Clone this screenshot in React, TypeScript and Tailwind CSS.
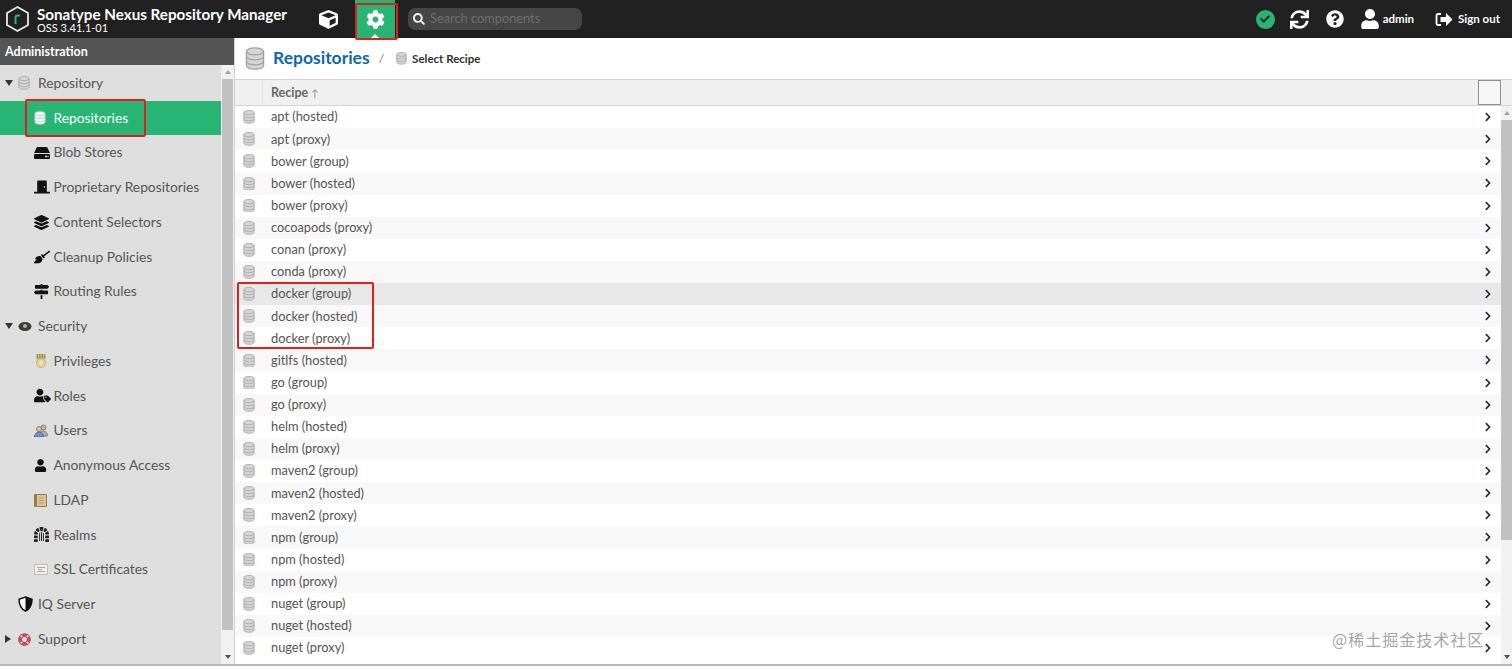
import type { ReactNode } from "react";
import {
  FaBroom,
  FaCheck,
  FaChevronRight,
  FaCog,
  FaCube,
  FaDoorClosed,
  FaDungeon,
  FaLayerGroup,
  FaLifeRing,
  FaMapSigns,
  FaQuestionCircle,
  FaSearch,
  FaSync,
  FaUser,
  FaUserTag,
} from "react-icons/fa";

const recipes = [
  "apt (hosted)",
  "apt (proxy)",
  "bower (group)",
  "bower (hosted)",
  "bower (proxy)",
  "cocoapods (proxy)",
  "conan (proxy)",
  "conda (proxy)",
  "docker (group)",
  "docker (hosted)",
  "docker (proxy)",
  "gitlfs (hosted)",
  "go (group)",
  "go (proxy)",
  "helm (hosted)",
  "helm (proxy)",
  "maven2 (group)",
  "maven2 (hosted)",
  "maven2 (proxy)",
  "npm (group)",
  "npm (hosted)",
  "npm (proxy)",
  "nuget (group)",
  "nuget (hosted)",
  "nuget (proxy)",
];

function DbIcon({ size = 14, light = false }: { size?: number; light?: boolean }) {
  const fill = light ? "#f4f4f4" : "#d6d6d6";
  const edge = light ? "#b5c9bd" : "#a2a2a2";
  return (
    <svg width={size} height={size * 1.15} viewBox="0 0 14 16" className="shrink-0">
      <path
        d="M1 3c0-1.400 2.700-2.500 6-2.500S13 1.600 13 3v10c0 1.400-2.700 2.500-6 2.500S1 14.400 1 13z"
        fill={fill}
        stroke={edge}
        strokeWidth="0.9"
      />
      <path
        d="M1 3c0 1.400 2.700 2.500 6 2.500S13 4.400 13 3M1 6.500C1 7.900 3.700 9 7 9s6-1.100 6-2.500M1 10c0 1.400 2.700 2.500 6 2.500s6-1.100 6-2.500"
        fill="none"
        stroke={edge}
        strokeWidth="0.9"
      />
    </svg>
  );
}

function BlobIcon() {
  return (
    <svg width="16" height="12" viewBox="0 0 16 12">
      <path d="M3 0h10l3 6H0z" fill="#111" />
      <rect x="0" y="7" width="16" height="5" rx="1" fill="#111" />
      <circle cx="12" cy="9.500" r="1" fill="#ddd" />
      <circle cx="14" cy="9.500" r="0.700" fill="#ddd" />
    </svg>
  );
}

function SignOutIcon() {
  return (
    <svg width="18" height="15" viewBox="0 0 18 15">
      <path d="M6 2H3a1.500 1.500 0 0 0-1.500 1.500v8A1.500 1.500 0 0 0 3 13h3" fill="none" stroke="#fff" strokeWidth="1.800" />
      <path d="M5.500 5H11V1l6.500 6.500L11 14v-4H5.500z" fill="#fff" />
    </svg>
  );
}

function Logo() {
  return (
    <svg width="25" height="28" viewBox="0 0 25 28">
      <path d="M12.500 2 L23 8 V20 L12.500 26 L2 20 V8 Z" fill="none" stroke="#e8e8e8" strokeWidth="1.800" />
      <path d="M4.500 9.500 L12.500 4.800" fill="none" stroke="#212121" strokeWidth="2" />
      <path d="M10.500 19v-6.500q0-2 2-2h2.500" fill="none" stroke="#2bb673" strokeWidth="2" />
    </svg>
  );
}

function MedalIcon() {
  return (
    <svg width="10" height="14" viewBox="0 0 10 14">
      <rect x="0.500" y="0" width="9" height="5" fill="#8f9a5c" />
      <path d="M2.500 0v5M5 0v5M7.500 0v5" stroke="#d9cf8a" strokeWidth="0.800" />
      <circle cx="5" cy="9" r="4.500" fill="#e7cf8f" stroke="#c7a95f" strokeWidth="0.800" />
      <circle cx="5" cy="9" r="2" fill="#f3e6bc" />
    </svg>
  );
}

function UsersIcon() {
  return (
    <svg width="14" height="13" viewBox="0 0 14 13">
      <circle cx="9.500" cy="3.500" r="2.500" fill="#c9b48f" stroke="#6e6a55" strokeWidth="0.700" />
      <path d="M5.500 12c0-3 1.500-5 4-5s4 2 4 5z" fill="#a7b39a" stroke="#6e6a55" strokeWidth="0.700" />
      <circle cx="5" cy="5" r="2.500" fill="#e2c7a0" stroke="#5e5f66" strokeWidth="0.700" />
      <path d="M0.500 13c0-3 1.700-5 4.500-5s4.500 2 4.500 5z" fill="#6f92c4" stroke="#44587a" strokeWidth="0.700" />
    </svg>
  );
}

function BookIcon() {
  return (
    <svg width="13" height="13" viewBox="0 0 13 13">
      <rect x="0" y="0" width="13" height="13" rx="1" fill="#9a7a4f" />
      <rect x="3" y="1" width="9" height="11" fill="#d9c294" />
      <path d="M5 4h5M5 6.500h5M5 9h5" stroke="#b49a68" strokeWidth="0.800" />
    </svg>
  );
}

function SslIcon() {
  return (
    <svg width="14" height="11" viewBox="0 0 14 11">
      <rect x="0.500" y="0.500" width="13" height="10" fill="#eeeeea" stroke="#c4bfaa" />
      <path d="M3 3.500h8M4 5.500h4M3 7.500h8" stroke="#a9a99a" />
    </svg>
  );
}

function NavRow({
  icon,
  label,
  child = false,
  arrow,
  active = false,
}: {
  icon: ReactNode;
  label: string;
  child?: boolean;
  arrow?: "down" | "right";
  active?: boolean;
}) {
  return (
    <div
      className={`flex h-[34.75px] shrink-0 items-center ${child ? "pl-[34px]" : "pl-[5px]"} ${
        active ? "bg-[#27b474] text-white" : "text-[#555555]"
      }`}
    >
      {!child && (
        <span className="flex w-[13px] shrink-0 items-center">
          {arrow === "down" && (
            <span className="h-0 w-0 border-x-[4px] border-t-[6px] border-x-transparent border-t-[#333333]" />
          )}
          {arrow === "right" && (
            <span className="h-0 w-0 border-y-[4px] border-l-[6px] border-y-transparent border-l-[#333333]" />
          )}
        </span>
      )}
      <span className={`flex shrink-0 items-center justify-start ${child ? "w-[19.5px]" : "w-[20px]"}`}>{icon}</span>
      <span className="text-[13.800px] whitespace-nowrap">{label}</span>
    </div>
  );
}

function SideScrollbar() {
  return (
    <div className="flex w-[13px] shrink-0 flex-col bg-[#f1f1f1]">
      <div className="flex h-[14px] items-center justify-center">
        <span className="h-0 w-0 border-x-[3px] border-b-[4px] border-x-transparent border-b-[#a3a3a3]" />
      </div>
      <div className="mx-[1px] h-[551px] bg-[#c1c1c1]" />
      <div className="flex-1" />
      <div className="flex h-[14px] items-center justify-center">
        <span className="h-0 w-0 border-x-[3px] border-t-[4px] border-x-transparent border-t-[#505050]" />
      </div>
    </div>
  );
}

function Sidebar() {
  return (
    <aside className="flex w-[235px] shrink-0 flex-col border-r border-[#d0d0d0] bg-[#dedede]">
      <div className="flex h-[27px] shrink-0 items-center bg-[#555555] pl-[5px] pt-[1px] text-[12.500px] font-bold text-white">
        Administration
      </div>
      <div className="flex min-h-0 flex-1">
        <div className="flex flex-1 flex-col overflow-hidden pt-[0.75px]">
          <NavRow arrow="down" label="Repository" icon={<DbIcon size={12} />} />
          <NavRow child active label="Repositories" icon={<DbIcon size={12} light />} />
          <NavRow child label="Blob Stores" icon={<BlobIcon />} />
          <NavRow child label="Proprietary Repositories" icon={<FaDoorClosed size={16} color="#111" />} />
          <NavRow child label="Content Selectors" icon={<FaLayerGroup size={15} color="#111" />} />
          <NavRow child label="Cleanup Policies" icon={<FaBroom size={16} color="#111" />} />
          <NavRow child label="Routing Rules" icon={<FaMapSigns size={15} color="#111" />} />
          <NavRow
            arrow="down"
            label="Security"
            icon={
              <svg width="14" height="11" viewBox="0 0 14 11">
                <ellipse cx="7" cy="5.500" rx="6.500" ry="4.500" fill="#3d3d35" />
                <circle cx="7" cy="5" r="2" fill="#b7b78f" />
              </svg>
            }
          />
          <NavRow child label="Privileges" icon={<span className="ml-[2px] flex"><MedalIcon /></span>} />
          <NavRow child label="Roles" icon={<FaUserTag size={17} color="#111" />} />
          <NavRow child label="Users" icon={<UsersIcon />} />
          <NavRow child label="Anonymous Access" icon={<FaUser size={13} color="#111" />} />
          <NavRow child label="LDAP" icon={<BookIcon />} />
          <NavRow child label="Realms" icon={<FaDungeon size={15} color="#222" />} />
          <NavRow child label="SSL Certificates" icon={<SslIcon />} />
          <div className="flex h-[34.75px] shrink-0 items-center pl-[18px] text-[#555555]">
            <svg width="15" height="16" viewBox="0 0 15 16" className="mr-[5px] shrink-0">
              <path d="M7.500 1 14 3.200c0 5-1.800 9.500-6.500 11.800C2.800 12.700 1 8.200 1 3.200z" fill="#fff" stroke="#111" strokeWidth="1.500" />
              <path d="M7.500 1 14 3.200c0 5-1.800 9.500-6.500 11.800z" fill="#111" />
            </svg>
            <span className="text-[13.800px]">IQ Server</span>
          </div>
          <NavRow arrow="right" label="Support" icon={<FaLifeRing size={13} color="#b7505a" />} />
        </div>
        <SideScrollbar />
      </div>
    </aside>
  );
}

function RecipeTable() {
  return (
    <div className="flex min-h-0 flex-1 flex-col">
      <div className="flex h-[27px] shrink-0 border-y border-[#d4d4d4] bg-[#f0f0f0] pr-[11px]">
        <div className="w-[28px] border-r border-[#e2e2e2]" />
        <div className="flex flex-1 items-center pl-[8px] pt-[1px] text-[12.500px] font-bold text-[#666666]">
          Recipe <span className="ml-[3px] text-[10px] font-normal text-[#888888]">↑</span>
        </div>
        <div className="h-[25px] w-[23px] border border-[#8f8f8f] bg-[#f6f6f6]" />
      </div>
      <div className="flex min-h-0 flex-1">
        <div className="flex-1 overflow-hidden">
          {recipes.map((name, i) => (
            <div
              key={name}
              className={`flex h-[22.125px] items-center pr-[8px] ${
                name === "docker (group)" ? "bg-[#e8e8e8]" : i % 2 === 1 ? "bg-[#f8f8f8]" : "bg-white"
              }`}
            >
              <span className="flex w-[36px] shrink-0 justify-start pl-[8px]">
                <DbIcon size={12} />
              </span>
              <span className="flex-1 text-[12.800px] text-[#555555]">{name}</span>
              <FaChevronRight size={10} color="#1a2a3f" />
            </div>
          ))}
        </div>
        <div className="flex w-[11px] shrink-0 flex-col bg-[#f1f1f1]">
          <div className="flex h-[14px] items-center justify-center">
            <span className="h-0 w-0 border-x-[3px] border-b-[4px] border-x-transparent border-b-[#a3a3a3]" />
          </div>
          <div className="h-[420px] bg-[#c1c1c1]" />
          <div className="flex-1" />
          <div className="flex h-[14px] items-center justify-center">
            <span className="h-0 w-0 border-x-[3px] border-t-[4px] border-x-transparent border-t-[#505050]" />
          </div>
        </div>
      </div>
    </div>
  );
}

export default function App() {
  return (
    <div className="relative flex h-[670px] w-[1512px] flex-col overflow-hidden bg-white font-['Lato','Open_Sans',sans-serif]">
      <header className="flex h-[38px] shrink-0 items-center bg-[#212121] text-white">
        <div className="ml-[5px] flex items-center">
          <Logo />
          <div className="ml-[7px] flex w-[251px] flex-col leading-none">
            <span className="text-[15.200px] font-bold leading-[16px] whitespace-nowrap">
              Sonatype Nexus Repository Manager
            </span>
            <span className="text-[11px] leading-[11px]">OSS 3.41.1-01</span>
          </div>
        </div>
        <div className="ml-[22px] flex h-[38px] w-[37px] items-center justify-center">
          <FaCube size={19} />
        </div>
        <div className="relative ml-[8px] flex h-[38px] w-[40px] items-center justify-center bg-[#27b474]">
          <FaCog size={19} />
          <span className="absolute bottom-0 left-1/2 h-0 w-0 -translate-x-1/2 border-x-[4px] border-b-[4px] border-x-transparent border-b-white" />
        </div>
        <div className="ml-[13px] flex h-[22px] w-[174px] items-center rounded-[7px] bg-[#464646] pl-[5px]">
          <FaSearch size={12} color="#f0f0f0" />
          <span className="ml-[5px] text-[12.800px] text-[#6e6e6e]">Search components</span>
        </div>
        <div className="ml-auto flex items-center">
          <span className="flex h-[19px] w-[19px] items-center justify-center rounded-full bg-[#27b474]">
            <FaCheck size={10} color="#1c2a25" />
          </span>
          <FaSync size={19} className="ml-[15px]" />
          <FaQuestionCircle size={18} className="ml-[17px]" />
          <FaUser size={20} className="ml-[16px]" />
          <span className="ml-[3px] text-[11.500px] font-bold">admin</span>
          <span className="ml-[21px]">
            <SignOutIcon />
          </span>
          <span className="ml-[5px] mr-[12px] text-[11.500px] font-bold">Sign out</span>
        </div>
      </header>

      <div className="flex h-[628px] shrink-0 border-b-2 border-[#b9b9b9]">
        <Sidebar />
        <main className="flex min-w-0 flex-1 flex-col">
          <div className="flex h-[41px] shrink-0 items-center pl-[10px]">
            <DbIcon size={20} />
            <span className="ml-[8px] text-[17.500px] font-bold text-[#0f67b0]">Repositories</span>
            <span className="ml-[9px] text-[12px] text-[#777777]">/</span>
            <span className="ml-[12px]">
              <DbIcon size={11} />
            </span>
            <span className="ml-[5px] text-[11.500px] font-bold text-[#333333]">Select Recipe</span>
          </div>
          <RecipeTable />
        </main>
      </div>

      {/* hand-drawn red marks sitting over the screenshot */}
      <div className="absolute left-[355px] top-[3px] h-[37px] w-[43px] rounded-[2px] border-2 border-[#e0201b]" />
      <div className="absolute left-[25px] top-[99px] h-[38px] w-[121px] rounded-[2px] border-2 border-[#e0201b]" />
      <div className="absolute left-[237px] top-[282px] h-[67px] w-[137px] rounded-[2px] border-2 border-[#e0201b]" />

      <div className="absolute left-[1332px] top-[627px] text-[16px] tracking-[1px] whitespace-nowrap text-[#8c8c8c]/80 font-['Noto_Sans_CJK_SC',sans-serif]">
        @稀土掘金技术社区
      </div>
    </div>
  );
}
